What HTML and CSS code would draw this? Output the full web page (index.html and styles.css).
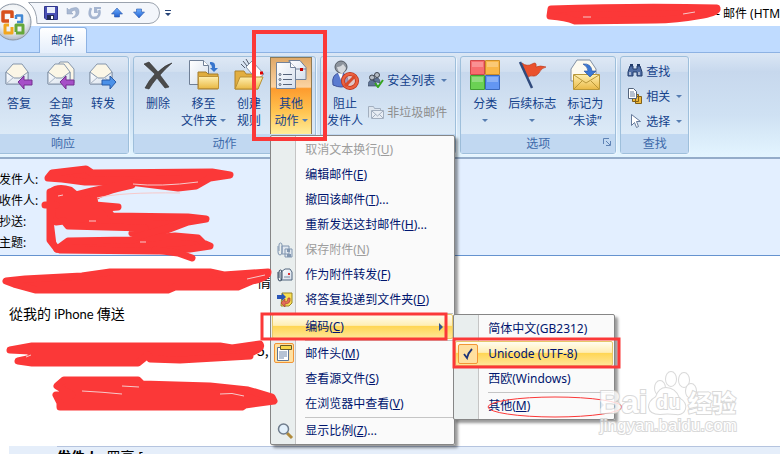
FILE: index.html
```html
<!DOCTYPE html>
<html lang="zh-CN">

<head>
  <meta charset="utf-8">
  <title>邮件 (HTML)</title>
  <link rel="stylesheet" href="styles.css">
</head>

<body>
  <svg class="defs" width="0" height="0" aria-hidden="true">
    <defs>
      <linearGradient id="gold" x1="0" y1="0" x2="0" y2="1">
        <stop offset="0" stop-color="#fff0b0"/><stop offset="1" stop-color="#e9b945"/>
      </linearGradient>
      <linearGradient id="paper" x1="0" y1="0" x2="1" y2="1">
        <stop offset="0" stop-color="#fff"/><stop offset="1" stop-color="#d5dfec"/>
      </linearGradient>
      <linearGradient id="blueArrow" x1="0" y1="0" x2="0" y2="1">
        <stop offset="0" stop-color="#6fb0ff"/><stop offset="1" stop-color="#1f5fd0"/>
      </linearGradient>
      <radialGradient id="orb" cx="50%" cy="35%" r="70%">
        <stop offset="0" stop-color="#fff"/><stop offset="0.6" stop-color="#eceff2"/><stop offset="1" stop-color="#a5aebb"/>
      </radialGradient>
      <g id="envelope">
        <path d="M2 12 L9 4 L18 4 L24 12 V24 H2 Z" fill="#fbf6e6" stroke="#8696ab"/>
        <path d="M2 12 L10 18 L16 18 L24 12 V24 H2 Z" fill="url(#paper)" stroke="#8696ab"/>
        <path d="M2 24 L10 17 M24 24 L16 17" stroke="#a9b5c5"/>
      </g>
      <g id="folder">
        <path d="M10 15 V13 H18 L20 15 H30 V30 H10 Z" fill="#dfac3d" stroke="#a47d2c"/>
        <path d="M10.500 17.500 H30.500 V29.500 H10.500 Z" fill="url(#gold)" stroke="#bd9238"/>
      </g>
    </defs>
  </svg>

  <header class="titlebar">
    <button class="office-btn" aria-label="Office">
      <svg width="38" height="38" viewBox="0 0 38 38">
        <circle cx="19" cy="19" r="18" fill="url(#orb)" stroke="#8b95a3"/>
        <g fill="none" stroke-linejoin="round">
          <path d="M18 15 V9 H9 V18 H15" stroke="#d8511c" stroke-width="3.500"/>
          <path d="M22 12.500 H28 V19 H23 M22 12 V16" stroke="#4389d4" stroke-width="2.500"/>
          <path d="M15 22 H11 V30 H18 V24" stroke="#f2a61d" stroke-width="3"/>
          <path d="M22 29 V22 H29 V30 H22" stroke="#65a83a" stroke-width="3"/>
        </g>
      </svg>
    </button>
    <nav class="quick-access" aria-label="快速访问工具栏">
      <svg class="quick-bg" width="132" height="22" viewBox="0 0 132 22" aria-hidden="true">
        <path d="M.5.500 H121 A10 10 0 0 1 121 21.500 H9 Q9 7 .5.500Z" fill="#f3f6fb" stroke="#9ba3ae"/>
      </svg>
      <button aria-label="保存">
        <svg width="14" height="14" viewBox="0 0 14 14"><path d="M.5.500h13v13H2L.5 12z" fill="#4a50b5" stroke="#30368c"/><path d="M3 1h8v6H3z" fill="#e8edfa"/><path d="M3 9h7v5H3z" fill="#222b55"/><path d="M7 10h2v3H7z" fill="#fff"/></svg>
      </button>
      <button aria-label="撤消">
        <svg width="14" height="14" viewBox="0 0 14 14"><path d="M1 2v6h6L5 6q5-4 5 1 0 3-4 5 7-1 7-6 0-6-6-4-2 0-4 2z" fill="#a9b9d3" stroke="#8c9dbb" stroke-width=".5"/></svg>
      </button>
      <button aria-label="恢复">
        <svg width="14" height="14" viewBox="0 0 14 14"><path d="M3 2Q0 9 4 11.500 9 13 11 9 12 6 11 4" fill="none" stroke="#a5b5d0" stroke-width="2.600"/><path d="M6 1h7v2H9l1 4H6z" fill="#a5b5d0"/></svg>
      </button>
      <button aria-label="上一项">
        <svg width="12" height="12" viewBox="0 0 12 12"><path d="M6 1l5.500 6h-3v3h-5V7h-3z" fill="url(#blueArrow)" stroke="#2b57a8" stroke-width=".6"/></svg>
      </button>
      <button aria-label="下一项">
        <svg width="12" height="12" viewBox="0 0 12 12"><path d="M6 11L.5 5h3V2h5v3h3z" fill="url(#blueArrow)" stroke="#2b57a8" stroke-width=".6"/></svg>
      </button>
    </nav>
    <button class="customize" aria-label="自定义快速访问工具栏">
      <svg width="6" height="7" viewBox="0 0 6 7"><path d="M0 0h6v1H0zM0 3h6L3 6z" fill="#264478"/></svg>
    </button>
    <span class="title">- 邮件 (HTML)</span>
  </header>

  <div class="tabs">
    <button class="tab">邮件</button>
  </div>

  <div class="ribbon">
    <section class="group first">
      <div class="tools">
        <button class="big">
          <svg width="30" height="30" viewBox="0 0 30 30"><use href="#envelope"/><path d="M14 22l6-6v4h8v5h-8v4z" fill="#a64fc8" stroke="#74308f"/></svg>
          <span>答复</span>
        </button>
        <button class="big">
          <svg width="30" height="30" viewBox="0 0 30 30"><path d="M10 8l4-6h8l6 7v14H10z" fill="#fbf6e6" stroke="#8696ab"/><use href="#envelope"/><path d="M14 22l6-6v4h8v5h-8v4z" fill="#a64fc8" stroke="#74308f"/></svg>
          <span>全部<br>答复</span>
        </button>
        <button class="big">
          <svg width="30" height="30" viewBox="0 0 30 30"><use href="#envelope"/><path d="M28 22l-6-6v4h-8v5h8v4z" fill="#4b91e8" stroke="#285aa6"/></svg>
          <span>转发</span>
        </button>
      </div>
      <h2>响应</h2>
    </section>

    <section class="group">
      <div class="tools">
        <button class="big">
          <svg width="30" height="30" viewBox="0 0 30 30"><path d="M1 4l5-2 9 10Q22 5 29 3 22 9 17 15l9 12-4 1-8-10Q9 24 6 29l-4-1Q6 20 12 14z" fill="#4b4b4b" stroke="#2f2f2f" stroke-width=".6"/></svg>
          <span>删除</span>
        </button>
        <button class="big">
          <svg width="32" height="32" viewBox="0 0 32 32"><path d="M1.500 1.500h14l5 5v19h-19z" fill="url(#paper)" stroke="#6f7f96"/><path d="M15.500 1.500v5h5" fill="#fff" stroke="#6f7f96"/><use href="#folder"/><path d="M22 3q6-1 5 6h3l-4 4-4-4h2q0-3-2-4z" fill="#3775cd"/></svg>
          <span>移至<br>文件夹 <i class="arrow"></i></span>
        </button>
        <button class="big">
          <svg width="32" height="32" viewBox="0 0 32 32"><path d="M2 30V12h9l2 3h12v15z" fill="#e2ae40" stroke="#ad8129"/><path d="M13 8l6-6 12 13-7 6z" fill="#fff" stroke="#8292a8"/><path d="M10 2l4 5M13 0l3 5M8 5l4 4" stroke="#555d6c"/><path d="M27 14h3" stroke="#d00" stroke-width="3"/><path d="M7 18h23l-5 12H2z" fill="url(#gold)" stroke="#b88f33"/></svg>
          <span>创建<br>规则</span>
        </button>
        <div class="dropdown">
          <button class="big active" aria-expanded="true">
            <svg width="32" height="32" viewBox="0 0 32 32"><path d="M14 1.500h11l6 7v12H18z" fill="url(#paper)" stroke="#73839a"/><path d="M14 1l5 9h12" fill="none" stroke="#73839a"/><path d="M25 9h3v3h-3z" fill="#c20000"/><path d="M1.500 3.500h14l5 5v21h-19z" fill="url(#paper)" stroke="#73839a"/><path d="M15.500 3.500v5h5" fill="#fff" stroke="#73839a"/><path d="M8 15.500h9M8 20.500h9M8 25.500h9" stroke="#56647a"/><g fill="#fff" stroke="#56647a"><circle cx="5" cy="15.500" r="1"/><circle cx="5" cy="20.500" r="1"/><circle cx="5" cy="25.500" r="1"/></g></svg>
            <span>其他<br>动作 <i class="arrow"></i></span>
          </button>

          <ul class="menu">
            <li><button disabled>取消文本换行(<u>U</u>)</button></li>
            <li><button>编辑邮件(<u>E</u>)</button></li>
            <li><button>撤回该邮件(<u>T</u>)...</button></li>
            <li><button>重新发送这封邮件(<u>H</u>)...</button></li>
            <li><button disabled>
              <svg width="18" height="18" viewBox="0 0 18 18"><path d="M6 5h7v8H6zM9 8h7v8H9z" fill="#e1e8f0" stroke="#8196b0"/><path d="M11 8h3v3h-3zM11 13h4v3h-4z" fill="#8196b0"/><path d="M2 5v6q0 3 2 3t2-3V4q0-2-1.500-2T3 4v6" fill="none" stroke="#8196b0"/></svg>
              保存附件(<u>N</u>)</button></li>
            <li><button>
              <svg width="18" height="18" viewBox="0 0 18 18"><path d="M5 6l4-3h5l2 3v8H5z" fill="url(#paper)" stroke="#52677f"/><path d="M12 7h2v2h-2z" fill="#d33"/><path d="M8 11h6" stroke="#7c8da2"/><path d="M2 6v6q0 3 2 3t2-3V6q0-2-1.500-2T3 6v6" fill="none" stroke="#34465d"/></svg>
              作为附件转发(<u>F</u>)</button></li>
            <li><button>
              <svg width="18" height="18" viewBox="0 0 18 18"><path d="M6 2h10v10l-3 3H5z" fill="#f9df54" stroke="#9a8524"/><path d="M1 4h5V2l4 4-4 4V8H1z" fill="#2b56b7"/><path d="M14 7q1 6-5 6v3l-4-4 4-4v3q3 0 3-4z" fill="#e26b59" stroke="#a4372b" stroke-width=".6"/></svg>
              将答复投递到文件夹(<u>D</u>)</button></li>
            <li class="rule"></li>
            <li class="dropdown">
              <button class="hot" aria-expanded="true">编码(<u>C</u>)<i class="more"></i></button>
              <ul class="menu submenu">
                <li><button>简体中文(GB2312)</button></li>
                <li><button class="hot">
                  <span class="checked"><svg width="10" height="12" viewBox="0 0 10 12"><path d="M1 6l3 4Q5 5 9 1" fill="none" stroke="#1e3478" stroke-width="1.800"/></svg></span>
                  Unicode (UTF-8)</button></li>
                <li><button>西欧(Windows)</button></li>
                <li class="rule"></li>
                <li><button>其他(<u>M</u>)<i class="more dim"></i></button></li>
              </ul>
            </li>
            <li class="rule"></li>
            <li><button>
              <span class="checked"><svg width="18" height="18" viewBox="0 0 18 18"><path d="M2.500 3.500h11v13h-11z" fill="#fff" stroke="#5b7396"/><path d="M4 8h8M4 10h8M4 12h8M4 14h5" stroke="#6e87aa"/><path d="M5.500 1.500h11v4h-11z" fill="#f7d648" stroke="#665c28"/></svg></span>
              邮件头(<u>M</u>)</button></li>
            <li><button>查看源文件(<u>S</u>)</button></li>
            <li><button>在浏览器中查看(<u>V</u>)</button></li>
            <li class="rule"></li>
            <li><button>
              <svg width="18" height="18" viewBox="0 0 18 18"><path d="M11 11l5 5" stroke="#b08a3c" stroke-width="3"/><circle cx="7.500" cy="7" r="5" fill="#e3f0fb" stroke="#6f7c8c" stroke-width="1.500"/></svg>
              显示比例(<u>Z</u>)...</button></li>
          </ul>
        </div>
      </div>
      <h2>动作</h2>
    </section>

    <section class="group">
      <div class="tools">
        <button class="big">
          <svg width="30" height="30" viewBox="0 0 30 30"><path d="M3 25q-2-11 7-12 9 0 8 12-6 4-15 0z" fill="#5a7bd0" stroke="#3e539b"/><path d="M8 13l3 7 2-7z" fill="#fff"/><circle cx="11" cy="7" r="6" fill="#8d949d" stroke="#555c66"/><path d="M7 7q4 0 6-3l3 4q-2 6-5 5-3-1-4-6" fill="#d6d9dd"/><circle cx="20" cy="21" r="7" fill="#f5b49f" fill-opacity=".5" stroke="#b8321a" stroke-width="4"/><circle cx="20" cy="21" r="7" fill="none" stroke="#ed6240" stroke-width="2.500"/><path d="M15 26l10-10" stroke="#d94b2b" stroke-width="3"/></svg>
          <span>阻止<br>发件人</span>
        </button>
        <div class="stack loose">
          <button class="small">
            <svg width="16" height="16" viewBox="0 0 16 16"><path d="M0 14q0-6 4-6t5 6zM5 9q1-3 4-3 3 0 3 5z" fill="#5f7496" stroke="#354257" stroke-width=".6"/><circle cx="4" cy="5.500" r="2.500" fill="#b6bdc6" stroke="#3d444e"/><circle cx="9" cy="3" r="2.500" fill="#b6bdc6" stroke="#3d444e"/><path d="M7 11l3 4 5-7" fill="none" stroke="#35a51d" stroke-width="2"/></svg>
            安全列表 <i class="arrow"></i>
          </button>
          <button class="small" disabled>
            <svg width="16" height="16" viewBox="0 0 16 16"><path d="M.5 13.500v-11h5l1 2h6v3" fill="#dde5ee" stroke="#a3afbf"/><path d="M3.500 6.500h12v8h-12z" fill="#e8edf4" stroke="#a3afbf"/><path d="M4 7l5.500 5L15 7M4 14l4-4M15 14l-4-4" fill="none" stroke="#a3afbf"/></svg>
            非垃圾邮件
          </button>
        </div>
      </div>
      <h2></h2>
    </section>

    <section class="group">
      <div class="tools">
        <button class="big">
          <svg width="30" height="30" viewBox="0 0 30 30"><path d="M.5.500h14v14H.5z" fill="#f76d6f" stroke="#cf4a4a"/><path d="M15.500.500h14v14h-14z" fill="#f9b748" stroke="#cc8d28"/><path d="M.5 15.500h14v14H.5z" fill="#6bd154" stroke="#429f33"/><path d="M15.500 15.500h14v14h-14z" fill="#6396f3" stroke="#3a68bd"/><path d="M2 2h11v5H2zM17 2h11v5H17zM2 17h11v5H2zM17 17h11v5H17z" fill="#fff" opacity=".25"/></svg>
          <span>分类<br><i class="arrow"></i></span>
        </button>
        <button class="big">
          <svg width="30" height="30" viewBox="0 0 30 30"><path d="M5 3q5 4 10 1t4 3q4-2 10 0-5 1-7 6-3 4-6 3-3-1-6 2z" fill="#ea512d" stroke="#b83516" stroke-width=".6"/><path d="M3 2l12 26" stroke="#304a7c" stroke-width="2.500"/></svg>
          <span>后续标志<br><i class="arrow"></i></span>
        </button>
        <button class="big wide">
          <svg width="32" height="32" viewBox="0 0 32 32"><path d="M2 10l6-9h13l6 9v12H2z" fill="#fdfaf0" stroke="#8190a5"/><path d="M4.500 15.500h26v15h-26z" fill="url(#gold)" stroke="#b9983a"/><path d="M5 16l12 8 13-8M5 30l8-8M30 30l-8-8" fill="none" stroke="#b9983a"/><path d="M14 5q8-1 9 7h4l-6 6-6-6h4q0-4-5-7z" fill="#3c78d4" stroke="#254f9a" stroke-width=".6"/></svg>
          <span>标记为<br>“未读”</span>
        </button>
      </div>
      <h2>选项<svg class="launcher" width="8" height="8" viewBox="0 0 8 8"><path d="M.5 6V.500H6M3 3l4 4M7.500 3v4.500H3" fill="none" stroke="#5f83b5"/></svg></h2>
    </section>

    <section class="group">
      <div class="tools">
        <div class="stack">
          <button class="small">
            <svg width="16" height="16" viewBox="0 0 16 16"><path d="M3 3h3v3h4V3h3l2 6v4h-5V9H6v4H1V9z" fill="#4f6da4" stroke="#223c6b"/><path d="M3 1h3v2H3zM10 1h3v2h-3z" fill="#223c6b"/><path d="M3 9v3M12 9v3" stroke="#fff"/></svg>
            查找
          </button>
          <button class="small">
            <svg width="16" height="16" viewBox="0 0 16 16"><path d="M8.500 8.500h6v7h-6zM5.500 6.500h6v7h-6z" fill="#f0b93c" stroke="#80601a"/><path d="M1.500.500h5l3 3v7h-8z" fill="#fff" stroke="#53647d"/><path d="M3 4h4M3 6h5M3 8h5" stroke="#6f83a1"/></svg>
            相关 <i class="arrow"></i>
          </button>
          <button class="small">
            <svg width="16" height="16" viewBox="0 0 16 16"><path d="M4.500 1.500v11l3-3 2 5 2-1-2-5h4z" fill="#fff" stroke="#667a9b"/></svg>
            选择 <i class="arrow"></i>
          </button>
        </div>
      </div>
      <h2>查找</h2>
    </section>
  </div>

  <div class="mail-header">
    <div>发件人:</div>
    <div>收件人:</div>
    <div>抄送:</div>
    <div>主题:</div>
  </div>

  <main class="mail-body">
    <p class="tail">情</p>
    <p>從我的 <span class="latin">iPhone</span> 傳送</p>
    <p class="tail">5,</p>
    <div class="quoted"><div><b>发件人:</b> 罗亮 [</div></div>
  </main>

  <!-- red pen marks -->
  <svg class="ink" width="780" height="454" viewBox="0 0 780 454" aria-hidden="true">
    <g class="boxes">
      <path d="M254 32H325V139H254Z" stroke-width="4"/>
      <path d="M262 314H446V339H262Z" stroke-width="3"/>
      <path d="M454 339H619V367H454Z" stroke-width="3"/>
      <ellipse cx="555" cy="407" rx="67" ry="10" stroke-width="1"/>
    </g>
    <g class="scribble">
      <path d="M551 9 Q640 6 717 8 Q718 12 703 15 Q675 20 655 20 L575 21 Q566 17 550 16Z"/>
      <path d="M48 178 L52 173 L86 169 L92 173 L212 172 L230 175 L210 178 L196 186 L178 188 L130 182 L85 182 L62 179Z"/>
      <path d="M51 192 Q58 186 70 190 L76 195 L92 191 L120 185 L132 185 Q100 192 94 198 L95 205 L118 207 L106 208 L112 216 L188 217 L206 219 L188 222 L167 230 L142 236 L132 233 L145 228 L68 226 L64 221 L56 222 L52 218Z"/>
      <path d="M45 205H56M50 192V240L57 249"/>
      <path d="M57 249 L68 241 L130 240 L175 236 L198 238 L203 243 L210 246 L190 249 L158 251 L60 250Z"/>
      <path d="M155 250 L178 253 L192 258M136 237L170 227"/>
      <path d="M6 281 L25 279 L82 276 L110 272 L210 272 L224 275 L268 272 Q268 278 252 281 L238 287 L175 287 L168 290 L36 290 L14 284Z"/>
      <path d="M10 350 L32 346 L220 346 L232 348 L260 344 Q263 349 250 353 L250 356 L180 360 L150 359 L148 355 L138 363 L32 363 L18 361 L32 358 L30 351Z"/>
      <path d="M64 380 L138 380 L142 384 L210 386 L248 390 L272 397 L274 401 L245 405 L242 407 L60 407 L60 403 L56 395 L72 395 L57 386Z"/>
    </g>
    <g class="gaps">
      <path d="M133 184Q160 187 198 182M97 198Q120 192 180 193M58 196l5-1M89 221h7M140 242h6M247 279l18-4M31 355l-5 2M82 391q20 1 40 3M122 386l17 1M220 394q12-2 24 2M583 17h8M683 14l12-2"/>
    </g>
  </svg>

  <svg class="watermark" width="142" height="66" viewBox="0 0 142 66" aria-label="Baidu 经验">
    <text class="brand" x="1" y="43">Bai</text>
    <g class="paw">
      <ellipse cx="62" cy="18" rx="5" ry="7"/>
      <ellipse cx="73" cy="9" rx="5" ry="7"/>
      <ellipse cx="86" cy="10" rx="5" ry="7"/>
      <ellipse cx="93" cy="21" rx="5" ry="7"/>
      <path d="M68 18q9 0 13 10 8 5 6 11-2 6-9 5-9-1-16 0-10 0-11-7 0-6 7-10 3-9 10-9z"/>
    </g>
    <text class="du" x="58" y="39">du</text>
    <text class="brand cn" x="90" y="42">经验</text>
    <text class="site" x="2" y="61">jingyan.baidu.com</text>
  </svg>
</body>

</html>
```

FILE: styles.css
```css
* {
  box-sizing: border-box;
}

body {
  position: relative;
  display: flex;
  flex-direction: column;
  height: 100vh;
  margin: 0;
  overflow: hidden;
  background: #fff;
  color: #000;
  font-family: "Noto Sans", "Noto Sans CJK SC", sans-serif;
  font-size: 12px;
  line-height: 17px;
}

button {
  margin: 0;
  padding: 0;
  border: 0;
  background: none;
  color: inherit;
  font: inherit;
  white-space: nowrap;
}

svg {
  flex-shrink: 0;
}

.defs {
  position: absolute;
}

/* title bar */
.titlebar {
  position: relative;
  display: flex;
  align-items: center;
  flex-shrink: 0;
  height: 26px;
  padding-left: 28px;
}

.office-btn {
  position: absolute;
  top: 3px;
  left: -6px;
  z-index: 2;
  height: 38px;
}

.quick-access {
  position: relative;
  display: flex;
  height: 22px;
  padding: 0 10px 0 12px;
}

.quick-access button {
  position: relative;
  display: flex;
  align-items: center;
  justify-content: center;
  width: 22px;
}

.quick-bg {
  position: absolute;
  top: 0;
  left: 0;
}

.customize {
  display: flex;
  margin-left: 5px;
}

.title {
  flex: 0 0 64px;
  margin-left: auto;
  overflow: hidden;
  white-space: nowrap;
}

.tabs {
  display: flex;
  align-items: flex-end;
  flex-shrink: 0;
  height: 27px;
  padding-left: 39px;
  border-bottom: 1px solid #8db2e3;
  background: #bfdbff;
}

.tab {
  height: 26px;
  margin-bottom: -1px;
  padding: 0 11px;
  border: 1px solid #8db2e3;
  border-bottom: 0;
  border-radius: 3px 3px 0 0;
  background: linear-gradient(#fff, #e4eefb);
  color: #15428b;
}

/* ribbon */
.ribbon {
  display: flex;
  flex-shrink: 0;
  gap: 4px;
  height: 106px;
  padding: 3px 0;
  border-bottom: 2px solid #94acc9;
  background: linear-gradient(#dbe7f5, #c7d8ed 18%, #cfe1f3 60%, #e3f5ff);
  color: #15428b;
}

.group {
  display: flex;
  flex-direction: column;
  border: 1px solid #9ebfdb;
  border-radius: 3px;
  background: linear-gradient(#dee8f5, #d1dff0 15%, #c7d8ed 16%, #dceaf7 80%);
  box-shadow: 1px 1px 0 #edf6ff;
}

.group h2 {
  position: relative;
  flex-shrink: 0;
  margin: 0;
  height: 19px;
  background: #c1d8f1;
  color: #3e6aaa;
  font-size: 12px;
  font-weight: normal;
  line-height: 19px;
  text-align: center;
}

.launcher {
  position: absolute;
  right: 4px;
  bottom: 7px;
}

.tools {
  display: flex;
  flex: 1;
  min-height: 0;
  padding: 0 3px;
}

.group.first {
  margin-left: -3px;
}

.first .tools {
  padding: 0 4px 0 0;
}

.big {
  display: flex;
  flex-direction: column;
  align-items: center;
  gap: 4px;
  min-width: 42px;
  height: 79px;
  padding: 2px 2px 0;
  text-align: center;
}

.big.wide {
  min-width: 54px;
}

.big svg {
  height: 32px;
}

.active {
  outline: 1px solid #8e7a55;
  outline-offset: -1px;
  background: linear-gradient(#dfa866, #fbd3a2 38%, #fd9b2e 40%, #ffc552 70%, #fff0a0);
}

.arrow {
  display: inline-block;
  border: 3px solid transparent;
  border-top-color: #567db1;
  border-bottom: 0;
  vertical-align: 3px;
}

.stack {
  display: flex;
  flex-direction: column;
  gap: 3px;
  padding: 3px 3px 0;
}

.stack.loose {
  gap: 10px;
  padding: 12px 5px 0 2px;
}

.small {
  display: flex;
  align-items: center;
  gap: 3px;
  height: 22px;
}

.small .arrow {
  margin-left: 3px;
}

.small:disabled {
  color: #8d8d8d;
}

/* drop-down menus */
.dropdown {
  position: relative;
}

.menu {
  position: absolute;
  top: 100%;
  left: 0;
  z-index: 5;
  width: 185px;
  margin: 0;
  padding: 1px;
  border: 1px solid #868686;
  border-radius: 2px;
  background: linear-gradient(90deg, #e9eeee 24px, #c5c5c5 24px, #c5c5c5 25px, #fafafa 25px);
  box-shadow: 3px 3px 3px rgba(0, 0, 0, 0.4);
  color: #00156e;
  list-style: none;
}

.tools > .dropdown > .menu {
  top: 78px;
}

.menu button {
  position: relative;
  display: block;
  width: 100%;
  height: 25px;
  padding-left: 33px;
  text-align: left;
}

.menu button:disabled {
  color: #9d9d9d;
}

.menu button > svg {
  position: absolute;
  top: 4px;
  left: 4px;
}

.menu .rule {
  height: 2px;
  margin-left: 33px;
  border-bottom: 1px solid #c5c5c5;
}

.menu .hot {
  border: 1px solid #e6c76a;
  border-radius: 2px;
  padding-left: 32px;
  background: linear-gradient(#fffdf0, #ffeeb5 45%, #ffd655 50%, #ffe697);
}

.checked {
  position: absolute;
  top: 2px;
  left: 2px;
  display: flex;
  align-items: center;
  justify-content: center;
  width: 20px;
  height: 20px;
  border: 1px solid #f29536;
  border-radius: 2px;
  background: #ffe0a0;
}

.more {
  position: absolute;
  top: 8px;
  right: 9px;
  border: 4px solid transparent;
  border-left-color: #35568f;
  border-right: 0;
}

.more.dim {
  border-left-color: #8a9cc0;
}

.submenu {
  top: 0;
  left: 100%;
  width: 162px;
}

/* message */
.mail-header {
  flex-shrink: 0;
  height: 97px;
  padding-top: 10px;
  border-bottom: 1px solid #6593cf;
  background: #e3efff;
  line-height: 21px;
  text-indent: -1px;
}

.mail-body {
  flex: 1;
  padding: 15px 0 0 9px;
  font-size: 14px;
  line-height: 20px;
}

.mail-body p {
  margin: 0 0 12px;
  font-family: "Noto Sans CJK TC", sans-serif;
}

.mail-body p + p {
  margin-bottom: 16px;
}

.mail-body .tail {
  padding-left: 248px;
}

.mail-body .latin {
  font-family: Lato, sans-serif;
  font-size: 13px;
}

.quoted {
  margin-top: 86px;
  padding-left: 48px;
  background: #e5eefa;
}

.quoted div {
  border-top: 1px solid #b5c4df;
}

/* marks drawn over the window */
.ink,
.watermark {
  position: absolute;
  z-index: 10;
  pointer-events: none;
}

.ink {
  top: 0;
  left: 0;
}

.boxes {
  fill: none;
  stroke: #fb3838;
}

.scribble {
  fill: #fb3838;
  stroke: #fb3838;
  stroke-width: 7px;
  stroke-linecap: round;
  stroke-linejoin: round;
}

.gaps {
  fill: none;
  stroke: #f7c9ca;
  stroke-width: 1px;
}

.watermark {
  top: 370px;
  left: 598px;
  opacity: 0.8;
}

.watermark text,
.paw {
  fill: #fff;
  stroke: #d0d0d0;
  stroke-width: 2px;
  paint-order: stroke;
}

.brand {
  font: bold 31px "Liberation Sans", sans-serif;
}

.cn {
  font: bold 24px "Noto Sans CJK SC", sans-serif;
}

.du {
  font: bold 20px "Liberation Sans", sans-serif;
}

.site {
  font: 17px "Liberation Sans", sans-serif;
}
```
